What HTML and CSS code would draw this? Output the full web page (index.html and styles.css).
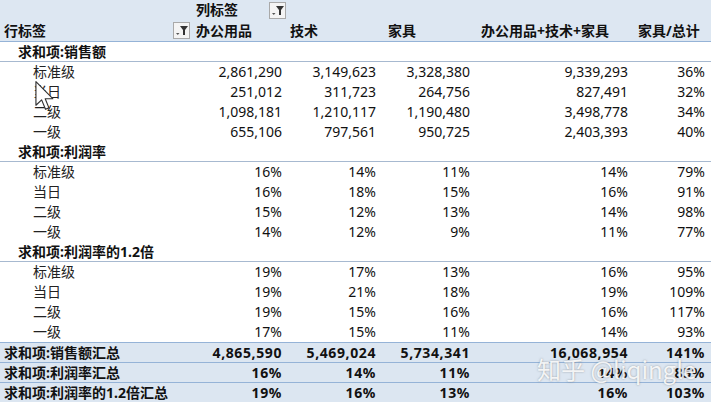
FILE: index.html
```html
<!DOCTYPE html>
<html lang="zh">
<head>
<meta charset="utf-8">
<link rel="stylesheet" href="styles.css">
</head>
<body>
<div class="pivot">
  <div class="head">
    <div class="row hrow1">
      <div class="cell"></div>
      <div class="cell h1 colhead">
        <span class="b">列标签</span>
        <span class="fbtn"><svg viewBox="0 0 15 15" width="15" height="15"><polygon points="6,3 14,3 11,7 11,12 9,12 9,7" fill="#333"/><polygon points="2,10 5.5,10 3.75,12" fill="#555"/></svg></span>
      </div>
      <div class="cell"></div><div class="cell"></div><div class="cell"></div><div class="cell"></div>
    </div>
    <div class="row hrow2">
      <div class="cell lab rowhead"><span class="b">行标签</span>
        <span class="fbtn"><svg viewBox="0 0 15 15" width="15" height="15"><polygon points="6,3 14,3 11,7 11,12 9,12 9,7" fill="#333"/><polygon points="2,10 5.5,10 3.75,12" fill="#555"/></svg></span>
      </div>
      <div class="cell h1 b">办公用品</div>
      <div class="cell h2 b">技术</div>
      <div class="cell h3 b">家具</div>
      <div class="cell h4 b">办公用品+技术+家具</div>
      <div class="cell h5 b">家具/总计</div>
    </div>
  </div>

  <div class="row grp"><div class="cell lab g b">求和项:销售额</div></div>
  <div class="row"><div class="cell lab it">标准级</div><div class="cell n">2,861,290</div><div class="cell n">3,149,623</div><div class="cell n">3,328,380</div><div class="cell n">9,339,293</div><div class="cell n">36%</div></div>
  <div class="row"><div class="cell lab it">当日</div><div class="cell n">251,012</div><div class="cell n">311,723</div><div class="cell n">264,756</div><div class="cell n">827,491</div><div class="cell n">32%</div></div>
  <div class="row"><div class="cell lab it">二级</div><div class="cell n">1,098,181</div><div class="cell n">1,210,117</div><div class="cell n">1,190,480</div><div class="cell n">3,498,778</div><div class="cell n">34%</div></div>
  <div class="row"><div class="cell lab it">一级</div><div class="cell n">655,106</div><div class="cell n">797,561</div><div class="cell n">950,725</div><div class="cell n">2,403,393</div><div class="cell n">40%</div></div>

  <div class="row grp"><div class="cell lab g b">求和项:利润率</div></div>
  <div class="row"><div class="cell lab it">标准级</div><div class="cell n">16%</div><div class="cell n">14%</div><div class="cell n">11%</div><div class="cell n">14%</div><div class="cell n">79%</div></div>
  <div class="row"><div class="cell lab it">当日</div><div class="cell n">16%</div><div class="cell n">18%</div><div class="cell n">15%</div><div class="cell n">16%</div><div class="cell n">91%</div></div>
  <div class="row"><div class="cell lab it">二级</div><div class="cell n">15%</div><div class="cell n">12%</div><div class="cell n">13%</div><div class="cell n">14%</div><div class="cell n">98%</div></div>
  <div class="row"><div class="cell lab it">一级</div><div class="cell n">14%</div><div class="cell n">12%</div><div class="cell n">9%</div><div class="cell n">11%</div><div class="cell n">77%</div></div>

  <div class="row grp"><div class="cell lab g b">求和项:利润率的1.2倍</div></div>
  <div class="row"><div class="cell lab it">标准级</div><div class="cell n">19%</div><div class="cell n">17%</div><div class="cell n">13%</div><div class="cell n">16%</div><div class="cell n">95%</div></div>
  <div class="row"><div class="cell lab it">当日</div><div class="cell n">19%</div><div class="cell n">21%</div><div class="cell n">18%</div><div class="cell n">19%</div><div class="cell n">109%</div></div>
  <div class="row"><div class="cell lab it">二级</div><div class="cell n">19%</div><div class="cell n">15%</div><div class="cell n">16%</div><div class="cell n">16%</div><div class="cell n">117%</div></div>
  <div class="row"><div class="cell lab it">一级</div><div class="cell n">17%</div><div class="cell n">15%</div><div class="cell n">11%</div><div class="cell n">14%</div><div class="cell n">93%</div></div>

  <div class="row tot first"><div class="cell lab t">求和项:销售额汇总</div><div class="cell n">4,865,590</div><div class="cell n">5,469,024</div><div class="cell n">5,734,341</div><div class="cell n">16,068,954</div><div class="cell n">141%</div></div>
  <div class="row tot"><div class="cell lab t">求和项:利润率汇总</div><div class="cell n">16%</div><div class="cell n">14%</div><div class="cell n">11%</div><div class="cell n">14%</div><div class="cell n">85%</div></div>
  <div class="row tot"><div class="cell lab t">求和项:利润率的1.2倍汇总</div><div class="cell n">19%</div><div class="cell n">16%</div><div class="cell n">13%</div><div class="cell n">16%</div><div class="cell n">103%</div></div>

  <svg class="cursor" viewBox="0 0 13 21" width="19" height="30"><polygon points="0.5,0.5 0.5,17 4.5,13.2 7.2,19.8 9.6,18.8 7,12.4 12.3,12.4" fill="#fff" stroke="#333" stroke-width="0.8" stroke-linejoin="round"/></svg>
  <div class="watermark">知乎 @liqingle</div>
</div>
</body>
</html>
```

FILE: styles.css
```css
html, body {
  margin: 0;
  padding: 0;
  background: #ffffff;
}
.pivot {
  position: relative;
  width: 711px;
  font-family: "Noto Sans", "Noto Sans CJK SC", sans-serif;
  font-size: 14px;
  color: #111;
  overflow: hidden;
}
.row {
  display: grid;
  grid-template-columns: 193px 93px 94px 94px 158px 79px;
  height: 20px;
  align-items: center;
}
.cell {
  white-space: nowrap;
  line-height: 20px;
  overflow: visible;
}
.b { font-weight: bold; }
.head {
  background: #dde7f2;
  border-bottom: 1px solid #95b3d7;
}
.hrow1 { height: 20px; }
.hrow2 { height: 21px; }
.colhead, .rowhead {
  display: flex;
  align-items: center;
  justify-content: space-between;
}
.colhead { padding-left: 4px; }
.rowhead { padding-left: 4px; padding-right: 3px; }
.fbtn {
  display: inline-flex;
  width: 17px;
  height: 17px;
  box-sizing: border-box;
  border: 1px solid #a9a9a9;
  background: #f4f4f4;
  align-items: center;
  justify-content: center;
}
.h1 { padding-left: 3px; }
.h2 { padding-left: 4px; }
.h3 { padding-left: 8px; }
.h4 { padding-left: 7px; }
.h5 { padding-left: 6px; }
.grp {
  height: 19px;
  border-bottom: 1px solid #a7b9d0;
}
.g { padding-left: 18px; }
.it { padding-left: 33px; color: #222; }
.t { padding-left: 4px; font-weight: bold; }
.n {
  text-align: right;
  padding-right: 4px;
}
.row .n:last-child { padding-right: 6px; }
.tot {
  background: #dce6f1;
  height: 19px;
  border-bottom: 1px solid #95b3d7;
}
.tot.first { border-top: 1px solid #95b3d7; }
.tot .n {
  font-weight: bold;
  letter-spacing: 0.6px;
}
.cursor {
  position: absolute;
  left: 35px;
  top: 81px;
}
.watermark {
  position: absolute;
  left: 537px;
  top: 354px;
  font-family: "Noto Sans CJK SC", "Noto Sans", sans-serif;
  font-size: 24px;
  line-height: 30px;
  color: rgba(255, 255, 255, 0.88);
  text-shadow: 0 0 2px rgba(90, 90, 90, 0.55);
  white-space: nowrap;
}
```
